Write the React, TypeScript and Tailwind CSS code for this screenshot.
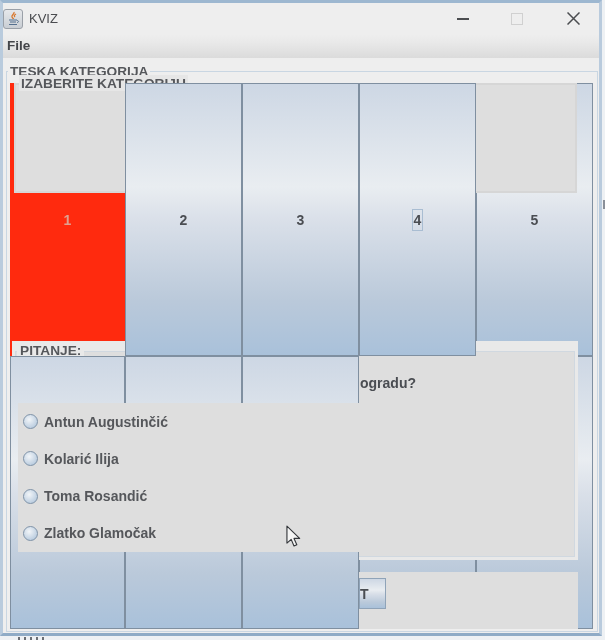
const font = { fontFamily: '"Liberation Sans", Arial, sans-serif' }

const buttonBg =
  'bg-[linear-gradient(180deg,#cdd7e4_0%,#e9edf1_38%,#dae0e9_50%,#bac9da_80%,#a9c1da_100%)]'

const answers = ['Antun Augustinčić', 'Kolarić Ilija', 'Toma Rosandić', 'Zlatko Glamočak']

function GridButton({ label, className = '', focused = false }: { label?: string; className?: string; focused?: boolean }) {
  return (
    <div className={`flex items-center justify-center border border-[#7f8fa0] text-sm font-bold text-[#4a4d52] ${buttonBg} ${className}`}>
      {label && (
        <span className={focused ? 'border border-[#a9bdd2] px-[1px] leading-[20px]' : ''}>{label}</span>
      )}
    </div>
  )
}

function JavaIcon() {
  return (
    <div className="flex h-[20px] w-[20px] items-center justify-center rounded-[3px] border border-[#9aa0a8] bg-[linear-gradient(180deg,#e6e8eb,#c9ced4)]">
      <svg width="13" height="15" viewBox="0 0 13 15">
        <path d="M7 1c1 2-3 3-2 5 .5 1 1.500 1.500 1.500 2M9 3C7 4 7 5 8 6" stroke="#d9762b" strokeWidth="1.300" fill="none" />
        <path d="M2 9h8M3 11h6M2 13.500h8" stroke="#55708f" strokeWidth="1.200" fill="none" />
        <path d="M10 9.500c2 0 2 2 0 2" stroke="#55708f" strokeWidth="1" fill="none" />
      </svg>
    </div>
  )
}

function TitleBar() {
  return (
    <div className="flex h-[31px] items-center pr-[19px] text-[#4a4c50]">
      <JavaIcon />
      <span className="ml-[6px] text-[13px]">KVIZ</span>
      <div className="ml-auto flex items-center">
        <div className="h-[2px] w-[12px] bg-[#4b4d50]" />
        <div className="ml-[42px] h-[12px] w-[12px] border border-[#d0d0d0]" />
        <svg className="ml-[44px]" width="13" height="13" viewBox="0 0 13 13">
          <path d="M.5.500l12 12M12.500.500l-12 12" stroke="#4b4d50" strokeWidth="1.500" />
        </svg>
      </div>
    </div>
  )
}

function MenuBar() {
  return (
    <div className="flex h-[24px] items-center bg-[linear-gradient(180deg,#eeeeee_0%,#eaeaea_30%,#dbdbdb_100%)] pl-[4px] text-[13.500px] font-bold text-[#44464a]">
      File
    </div>
  )
}

function Cursor() {
  return (
    <svg className="absolute left-[283px] top-[522px] z-40" width="16" height="24" viewBox="0 0 17 25">
      <path d="M1 1v18l4.500-4 3 7 3-1.300-3-6.700h6z" fill="#f4f4f4" stroke="#33363a" strokeWidth="1.200" strokeLinejoin="round" />
    </svg>
  )
}

export default function App() {
  return (
    <div style={font} className="relative h-[640px] w-[605px] overflow-hidden bg-[#eef1f4] blur-[0.5px]">
      {/* bits of the desktop behind the window */}
      <div className="absolute left-[18px] top-[637px] h-[3px] w-[30px] bg-[repeating-linear-gradient(90deg,#6b6f75_0_2px,transparent_2px_6px)]" />
      <div className="absolute left-[603px] top-[200px] h-[9px] w-[2px] bg-[#8a9099]" />

      <div className="relative h-[636px] w-[602px] overflow-hidden border-[3px] border-x-[#b9cbdd] border-t-[#9db7d0] border-b-[#8fabc6] bg-[#eeeeee]">
        <TitleBar />
        <MenuBar />

        {/* outer titled border */}
        <div className="relative ml-[3px] mt-[13px] h-[561px] w-[592px] border border-[#c9d6e2] px-[3px] pb-[3px] pt-[11px]">
          <span className="absolute left-[1px] top-[-8px] h-[11px] overflow-hidden bg-[#eeeeee] px-[2px] text-[13.700px] font-bold leading-[16px] text-[#55575b]">
            TESKA KATEGORIJA
          </span>

          {/* button grid, z-index decides what got repainted on top */}
          <div className="grid h-[546px] w-[583px] grid-cols-[115px_117px_117px_117px_117px] grid-rows-[273px_273px]">
            <div className="flex items-center justify-center bg-[#ff2a0e] text-sm font-bold text-[#e0a090]">1</div>
            <GridButton label="2" className="z-20" />
            <GridButton label="3" className="z-20" />
            <GridButton label="4" focused className="z-20" />
            <GridButton label="5" />
            <GridButton className="z-20" />
            <GridButton className="z-20" />
            <GridButton className="z-20" />
            <GridButton />
            <GridButton />
          </div>

          {/* category panel */}
          <div className="absolute left-[7px] top-[11px] z-10 h-[110px] w-[563px] border-2 border-[#d6d6d6] bg-[#dedede]">
            <span className="absolute left-[3px] top-[-10px] h-[16px] overflow-hidden bg-[#e6e6e6] px-[2px] text-[13.700px] font-bold leading-[18px] text-[#55575b]">
              IZABERITE KATEGORIJU
            </span>
          </div>

          {/* question panel */}
          <div className="absolute left-[5px] top-[269px] z-10 h-[219px] w-[566px] bg-[#e9e9e9] px-[3px] pt-[10px]">
            <span className="absolute left-[5px] top-[2px] bg-[#e9e9e9] px-[3px] text-[13.700px] font-bold leading-[16px] text-[#55575b]">PITANJE:</span>
            <div className="h-[206px] border border-[#d0d8e0] bg-[#dedede] pl-[344px] pt-[21px] text-sm font-bold text-[#4a4d52]">
              ogradu?
            </div>
          </div>

          {/* bottom buttons panel */}
          <div className="absolute left-[5px] top-[500px] z-10 flex h-[57px] w-[566px] items-start bg-[#dedede] pl-[347px] pt-[6px]">
            <div className={`flex h-[31px] w-[27px] items-center border border-[#8fa3b8] text-sm font-bold text-[#4a4d52] ${buttonBg}`}>
              T
            </div>
          </div>

          {/* answers, left part of the radio group */}
          <div className="absolute left-[11px] top-[331px] z-30 flex h-[149px] w-[341px] flex-col justify-around bg-[#dedede] pl-[5px]">
            {answers.map(a => (
              <label key={a} className="flex items-center gap-[6px] text-sm font-bold text-[#55575b]">
                <span className="h-[15px] w-[15px] rounded-full border border-[#7f93a8] bg-[radial-gradient(circle_at_40%_35%,#f2f5f8,#a9c0d8)]" />
                {a}
              </label>
            ))}
          </div>
        </div>

        <Cursor />
      </div>
    </div>
  )
}
